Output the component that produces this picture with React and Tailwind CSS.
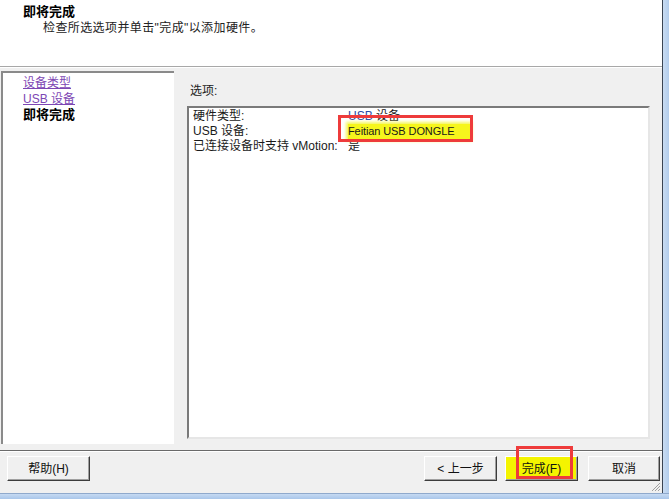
import React from "react";

// Win7 "Add Hardware" wizard — last step (review + finish)
const SUMMARY = [
  { label: "硬件类型:", value: "USB 设备" },
  { label: "USB 设备:", value: "Feitian USB DONGLE", mark: true },
  { label: "已连接设备时支持 vMotion:", value: "是" },
];

function ClassicButton({ children, className = "", yellow = false }) {
  return (
    <button
      className={`h-[25px] border border-t-white border-l-white border-r-[#3c3c3c] border-b-[#3c3c3c] shadow-[inset_-1px_-1px_0_#a0a0a0] text-[12px] leading-none text-[#111] ${
        yellow ? "bg-[#f4f400]" : "bg-[#f0f0f0]"
      } ${className}`}
    >
      {children}
    </button>
  );
}

export default function App() {
  return (
    <div className="relative w-[669px] h-[499px] overflow-hidden flex flex-col bg-[#f0f0f0] font-['Liberation_Sans','Noto_Sans_CJK_SC',sans-serif] text-black">
      <div className="flex h-[493px]">
        <div className="w-[662px] flex flex-col">
          {/* header */}
          <div className="h-[66px] bg-white pl-[23px] pt-[4px]">
            <div className="text-[13px] font-bold leading-[16px]">即将完成</div>
            <div className="pl-[20px] text-[12px] leading-[16px] text-[#222] tracking-[0.4px]">
              检查所选选项并单击"完成"以添加硬件。
            </div>
          </div>
          <div className="h-[1px] bg-[#a8a8a8]" />
          <div className="h-[1px] bg-white" />

          {/* body */}
          <div className="flex-1 flex pt-[3px]">
            <div className="ml-[1px] w-[173px] h-[373px] bg-white border-t-2 border-l-2 border-t-[#8a8a8a] border-l-[#8a8a8a] pl-[20px] pt-[2px] text-[12px] leading-[16px]">
              <div className="text-[#7d46b4] underline">设备类型</div>
              <div className="text-[#7d46b4] underline">USB 设备</div>
              <div className="font-bold text-[13px]">即将完成</div>
            </div>

            <div className="ml-[13px] flex flex-col pt-[12px]">
              <div className="pl-[3px] text-[12px] leading-[16px] text-[#222]">选项:</div>
              <div className="mt-[7px] w-[463px] h-[333px] bg-white border-2 border-t-[#7a7a7a] border-l-[#7a7a7a] border-r-[#e6e6e6] border-b-[#e6e6e6] pl-[4px] pt-[1px] text-[12px] leading-[15px] text-[#1a1a1a]">
                {SUMMARY.map((row) => (
                  <div key={row.label} className="flex">
                    <span className="w-[155px] shrink-0">{row.label}</span>
                    <span
                      className={
                        row.mark
                          ? "bg-[#f6f61c] shadow-[0_0_3px_2px_#f6f65a] pr-[16px] text-[11px] tracking-[-0.1px]"
                          : ""
                      }
                    >
                      {row.value === "USB 设备" ? (
                        <>
                          <span className="text-[#2c4aa6]">USB</span> 设备
                        </>
                      ) : (
                        row.value
                      )}
                    </span>
                  </div>
                ))}
              </div>
            </div>
          </div>

          {/* footer */}
          <div className="h-[1px] bg-[#6a6a6a]" />
          <div className="h-[1px] bg-white" />
          <div className="h-[41px] flex pt-[4px] pr-[2px]">
            <ClassicButton className="ml-[7px] w-[83px]">帮助(H)</ClassicButton>
            <div className="flex-1" />
            <ClassicButton className="w-[73px]">&lt; 上一步</ClassicButton>
            <ClassicButton yellow className="ml-[8px] w-[73px]">完成(F)</ClassicButton>
            <ClassicButton className="ml-[10px] w-[72px]">取消</ClassicButton>
          </div>
        </div>
        <div className="w-[7px] border-l border-[#3a4452] bg-gradient-to-r from-[#c9dcf2] to-[#b3cdec]" />
      </div>
      <div className="h-[6px] border-t border-[#8fa9cc] bg-gradient-to-b from-[#c6daf2] to-[#a9c6ea]" />

      {/* resize grip */}
      <svg className="absolute left-[650px] top-[481px]" width="11" height="11" viewBox="0 0 11 11">
        <path d="M10 2 L2 10 M10 5 L5 10 M10 8 L8 10" stroke="#a0a0a0" strokeWidth="1" />
      </svg>

      {/* red annotation boxes */}
      <div className="absolute left-[338px] top-[115px] w-[135px] h-[27px] border-[3px] border-[#ee3b3b]" />
      <div className="absolute left-[516px] top-[446px] w-[57px] h-[33px] border-[3px] border-[#ee3b3b]" />
    </div>
  );
}
